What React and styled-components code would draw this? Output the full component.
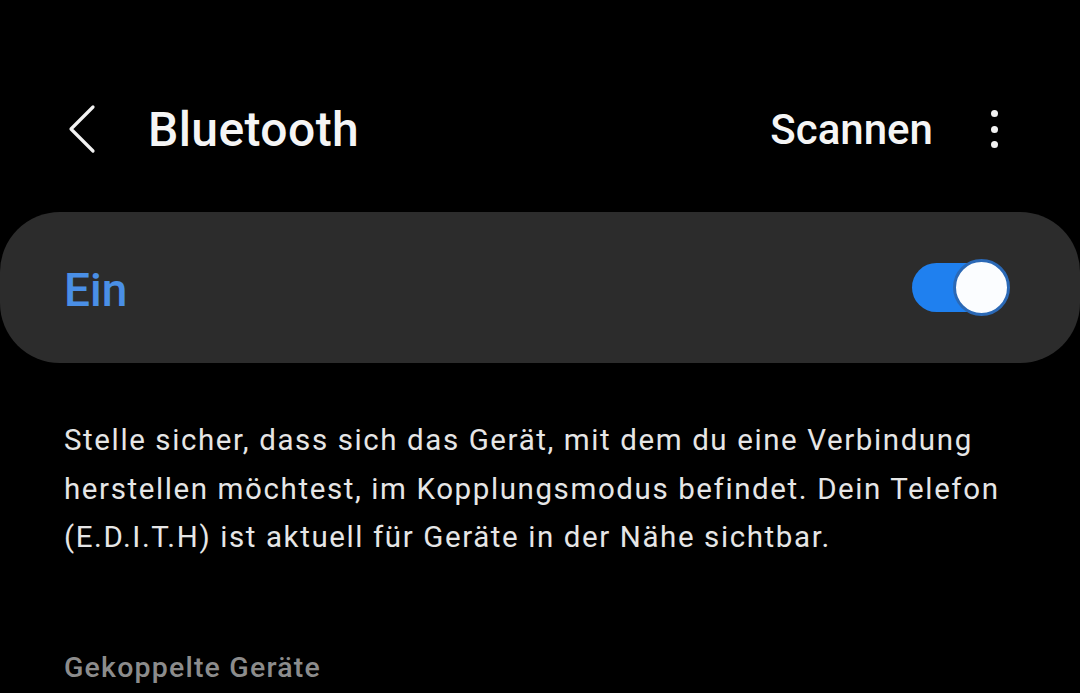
import React from "react";
import styled, { createGlobalStyle } from "styled-components";

const Global = createGlobalStyle`
  html, body { margin: 0; padding: 0; background: #000; }
  body { font-family: Roboto, "Noto Sans", "Liberation Sans", sans-serif; }
`;

const Screen = styled.div`
  width: 1080px;
  height: 693px;
  background: #000;
  overflow: hidden;
  display: flex;
  flex-direction: column;
`;

const Header = styled.div`
  display: flex;
  align-items: center;
  height: 90px;
  margin-top: 84px;
  padding: 0 82px 0 66px;
`;

const BackButton = styled.div`
  width: 32px;
  height: 50px;
  display: flex;
  align-items: center;
  justify-content: center;
  margin-right: 50px;
`;

const Title = styled.h1`
  margin: 0;
  flex: 1;
  font-size: 48px;
  font-weight: 500;
  color: #f5f5f5;
  letter-spacing: 0.4px;
`;

const Action = styled.span`
  font-size: 42px;
  font-weight: 500;
  color: #f5f5f5;
  margin-right: 58px;
`;

const Dots = styled.div`
  display: flex;
  flex-direction: column;
  gap: 8.5px;
  align-items: center;
`;

const Dot = styled.span`
  width: 7px;
  height: 7px;
  border-radius: 50%;
  background: #f2f2f2;
`;

const Card = styled.div`
  margin-top: 38px;
  height: 151px;
  background: #2c2c2c;
  border-radius: 60px;
  display: flex;
  align-items: center;
  justify-content: space-between;
  padding: 4px 70px 0 64px;
  box-sizing: border-box;
`;

const CardLabel = styled.span`
  font-size: 46px;
  font-weight: 500;
  color: #4a8fe6;
`;

const Switch = styled.div`
  position: relative;
  width: 98px;
  height: 57px;
  margin-top: -4px;
`;

const Track = styled.div`
  position: absolute;
  left: 0;
  top: 4px;
  width: 92px;
  height: 49px;
  border-radius: 25px;
  background: #1f80ef;
`;

const Thumb = styled.div`
  position: absolute;
  right: 0;
  top: 0;
  width: 51px;
  height: 51px;
  border-radius: 50%;
  background: #fbfdff;
  border: 3px solid #2b69b6;
`;

const Description = styled.p`
  margin: 53px 0 0;
  padding: 0 64px;
  font-size: 29.5px;
  line-height: 48.5px;
  letter-spacing: 1.6px;
  color: #e6e6e6;
  font-weight: 400;
`;

const SectionTitle = styled.h2`
  margin: 88px 0 0;
  padding: 0 64px;
  font-size: 28.5px;
  line-height: 36px;
  letter-spacing: 1.2px;
  font-weight: 500;
  color: #8c8c8c;
`;

export default function App() {
  return (
    <Screen>
      <Global />
      <Header>
        <BackButton>
          <svg width="32" height="50" viewBox="0 0 32 50">
            <path d="M27 3 L5 25 L27 47" fill="none" stroke="#f2f2f2" strokeWidth="3.2" strokeLinecap="round" strokeLinejoin="round" />
          </svg>
        </BackButton>
        <Title>Bluetooth</Title>
        <Action>Scannen</Action>
        <Dots>
          <Dot />
          <Dot />
          <Dot />
        </Dots>
      </Header>
      <Card>
        <CardLabel>Ein</CardLabel>
        <Switch>
          <Track />
          <Thumb />
        </Switch>
      </Card>
      <Description>
        Stelle sicher, dass sich das Gerät, mit dem du eine Verbindung herstellen möchtest, im Kopplungsmodus befindet. Dein Telefon (E.D.I.T.H) ist aktuell für Geräte in der Nähe sichtbar.
      </Description>
      <SectionTitle>Gekoppelte Geräte</SectionTitle>
    </Screen>
  );
}
